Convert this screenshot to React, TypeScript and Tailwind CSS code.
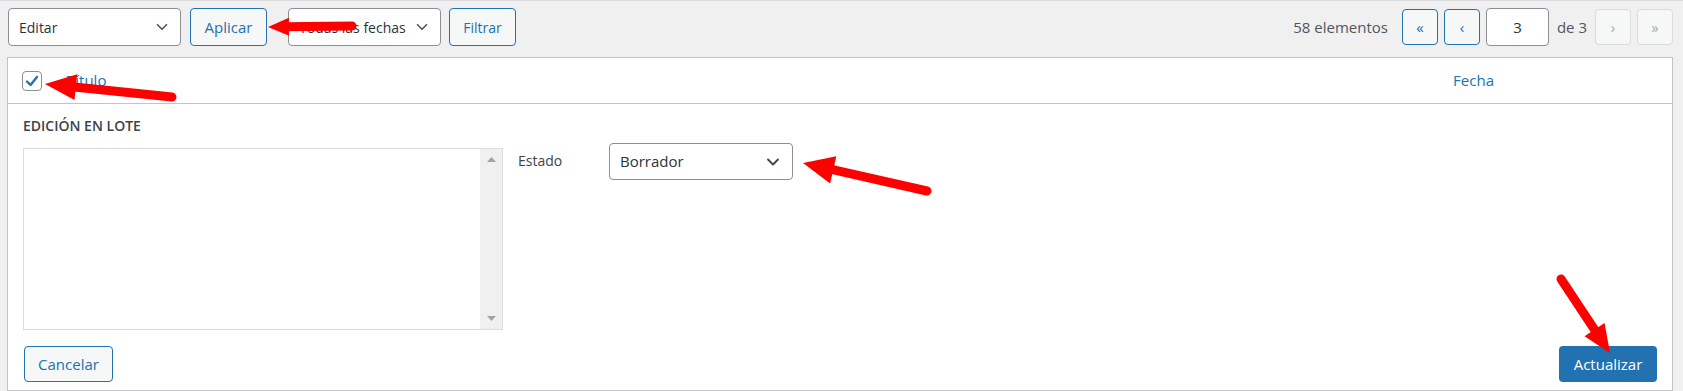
import { ChevronDown } from "lucide-react";

// red annotation arrows drawn over the screenshot
const arrows = [
  { x1: 352, y1: 25, x2: 268, y2: 26, len: 21, half: 9 },
  { x1: 172, y1: 96, x2: 45, y2: 83, len: 31, half: 13 },
  { x1: 927, y1: 190, x2: 803, y2: 162, len: 31, half: 14 },
  { x1: 1561, y1: 278, x2: 1610, y2: 352, len: 28, half: 12 },
];

function Arrow({ x1, y1, x2, y2, len, half }: (typeof arrows)[number]) {
  const dx = x2 - x1;
  const dy = y2 - y1;
  const d = Math.hypot(dx, dy);
  const ux = dx / d;
  const uy = dy / d;
  const bx = x2 - ux * len;
  const by = y2 - uy * len;
  const pts = `${x2},${y2} ${bx - uy * half},${by + ux * half} ${bx + uy * half},${by - ux * half}`;
  return (
    <g>
      <line x1={x1} y1={y1} x2={bx + ux * 4} y2={by + uy * 4} stroke="#ff0000" strokeWidth={9} strokeLinecap="round" />
      <polygon points={pts} fill="#ff0000" />
    </g>
  );
}

function Select({ label, className }: { label: string; className: string }) {
  return (
    <div
      className={`flex items-center justify-between rounded-[4px] border border-[#8c8f94] bg-white pl-[10px] pr-[9px] text-[14px] text-[#2c3338] ${className}`}
    >
      <span>{label}</span>
      <ChevronDown size={18} strokeWidth={2.2} className="text-[#50575e]" />
    </div>
  );
}

function SecondaryButton({ label, className }: { label: string; className: string }) {
  return (
    <div
      className={`flex items-center justify-center rounded-[4px] border border-[#2271b1] bg-[#f6f7f7] text-[#2271b1] ${className}`}
    >
      {label}
    </div>
  );
}

function PageButton({ label, disabled }: { label: string; disabled?: boolean }) {
  return (
    <div
      className={
        disabled
          ? "flex h-[36px] w-[36px] items-center justify-center rounded-[4px] border border-[#dcdcde] bg-[#f6f7f7] text-[15px] text-[#a7aaad]"
          : "flex h-[36px] w-[36px] items-center justify-center rounded-[4px] border border-[#2271b1] bg-[#f6f7f7] text-[15px] text-[#2271b1]"
      }
    >
      {label}
    </div>
  );
}

export default function App() {
  return (
    <div className="relative h-[391px] w-[1683px] overflow-hidden border-t border-[#dcdcde] bg-[#f0f0f1] font-['Open_Sans',sans-serif] text-[#2c3338]">
      {/* top nav */}
      <div className="mt-[7px] flex h-[38px] items-center pl-[8px] pr-[10px]">
        <Select label="Editar" className="h-[38px] w-[173px]" />
        <SecondaryButton label="Aplicar" className="ml-[9px] h-[38px] w-[77px] text-[15px]" />
        <Select label="Todas las fechas" className="ml-[21px] h-[38px] w-[153px]" />
        <SecondaryButton label="Filtrar" className="ml-[8px] h-[38px] w-[67px] text-[14px]" />

        <div className="ml-auto flex items-center">
          <span className="mr-[14px] text-[15px] text-[#50575e]">58 elementos</span>
          <div className="flex items-center gap-[6px]">
            <PageButton label="«" />
            <PageButton label="‹" />
            <div className="flex h-[38px] w-[63px] items-center justify-center rounded-[4px] border border-[#8c8f94] bg-white text-[15px]">
              3
            </div>
            <span className="mx-[2px] text-[15px] text-[#50575e]">de 3</span>
            <PageButton label="›" disabled />
            <PageButton label="»" disabled />
          </div>
        </div>
      </div>

      {/* table */}
      <div className="mt-[11px] ml-[7px] mr-[10px] border border-[#c3c4c7] bg-white">
        <div className="flex h-[46px] items-center border-b border-[#c3c4c7]">
          <div className="ml-[14px] flex h-[20px] w-[20px] items-center justify-center rounded-[4px] border border-[#8c8f94] bg-white">
            <svg width="16" height="16" viewBox="0 0 16 16">
              <path d="M3 8.5 L6.5 12 L13 4" fill="none" stroke="#2271b1" strokeWidth="2.4" strokeLinecap="round" strokeLinejoin="round" />
            </svg>
          </div>
          <span className="ml-[25px] text-[15px] text-[#2271b1]">Título</span>
          <span className="ml-auto mr-[178px] text-[15px] text-[#2271b1]">Fecha</span>
        </div>

        <div className="pt-[12px] pb-[8px] pl-[15px] pr-[15px]">
          <div className="text-[14px] leading-[20px] font-semibold text-[#3c434a]">EDICIÓN EN LOTE</div>

          <div className="mt-[7px] flex items-start">
            <div className="mt-[5px] flex h-[182px] w-[480px] border border-[#dcdcde] bg-white">
              <div className="flex-1" />
              <div className="flex w-[22px] flex-col items-center justify-between bg-[#f0f0f0] py-[8px]">
                <svg width="9" height="5" viewBox="0 0 9 5">
                  <path d="M0 5 L4.5 0 L9 5 Z" fill="#a3a3a3" />
                </svg>
                <svg width="9" height="5" viewBox="0 0 9 5">
                  <path d="M0 0 L4.5 5 L9 0 Z" fill="#a3a3a3" />
                </svg>
              </div>
            </div>

            <span className="ml-[15px] mt-[8px] w-[91px] text-[14px] leading-[20px] text-[#3c434a]">Estado</span>
            <div className="flex h-[37px] w-[184px] items-center justify-between rounded-[4px] border border-[#8c8f94] bg-white pl-[10px] pr-[9px] text-[15px] text-[#2c3338]">
              <span>Borrador</span>
              <ChevronDown size={20} strokeWidth={2.2} className="text-[#3c434a]" />
            </div>
          </div>

          <div className="mt-[16px] flex items-center justify-between">
            <SecondaryButton label="Cancelar" className="ml-[1px] h-[36px] w-[89px] text-[15px]" />
            <div className="flex h-[36px] w-[98px] items-center justify-center rounded-[4px] bg-[#2271b1] text-[15px] text-white">
              Actualizar
            </div>
          </div>
        </div>
      </div>

      <svg className="pointer-events-none absolute inset-0" width="1683" height="391">
        {arrows.map((a, i) => (
          <Arrow key={i} {...a} />
        ))}
      </svg>
    </div>
  );
}
